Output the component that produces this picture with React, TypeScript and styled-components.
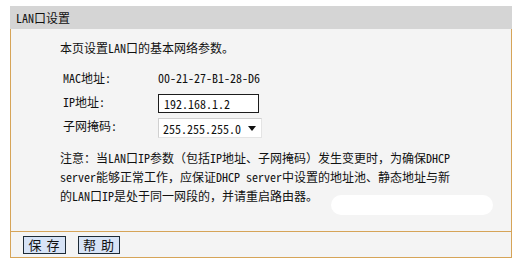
import React from "react";
import styled, { createGlobalStyle } from "styled-components";

const Global = createGlobalStyle`
  html, body { margin: 0; padding: 0; background: #ffffff; }
  body {
    font-family: "Noto Sans Mono CJK SC", "Liberation Mono", "Noto Sans CJK SC", monospace;
    font-size: 12px;
    color: #111;
  }
`;

const Frame = styled.div`
  margin: 6px 0 0 10px;
  width: 502px;
`;

const Header = styled.div`
  height: 23px;
  line-height: 23px;
  background: #d5d5d5;
  padding-left: 6px;
  font-size: 12px;
  color: #111;
`;

const Panel = styled.div`
  position: relative;
  border-left: 1px solid #d6a458;
  border-right: 1px solid #d6a458;
  border-bottom: 1px solid #d6a458;
  background: #f4f4f4;
  height: 203px;
  box-sizing: border-box;
  padding: 10px 0 0 49px;
`;

const Intro = styled.div`
  line-height: 18px;
  height: 18px;
`;

const Form = styled.div`
  display: grid;
  grid-template-columns: 95px auto;
  grid-auto-rows: 24px;
  align-items: center;
  margin: 9px 0 0 3px;
`;

const Label = styled.div`
  line-height: 18px;
`;

const Value = styled.div`
  line-height: 18px;
`;

const TextInput = styled.input`
  box-sizing: border-box;
  width: 101px;
  height: 19px;
  margin-top: 2px;
  border: 1px solid #1c1c1c;
  background: #fff;
  padding: 0 0 0 5px;
  font: inherit;
  font-size: 12px;
  color: #111;
  outline: none;
`;

const Select = styled.div`
  box-sizing: border-box;
  width: 104px;
  height: 20px;
  margin-top: 4px;
  border: 1px solid #d0d0d0;
  border-right-color: #e4e4e4;
  border-bottom-color: #e4e4e4;
  background: #fff;
  display: flex;
  align-items: center;
  justify-content: space-between;
  padding: 0 5px 0 4px;
`;

const Arrow = styled.span`
  width: 0;
  height: 0;
  border-left: 4px solid transparent;
  border-right: 4px solid transparent;
  border-top: 5px solid #111;
`;

const Note = styled.div`
  margin-top: 10px;
  line-height: 19px;
`;

const Blob = styled.div`
  position: absolute;
  left: 320px;
  top: 166px;
  width: 162px;
  height: 20px;
  border-radius: 10px;
  background: #ffffff;
`;

const Footer = styled.div`
  height: 25px;
  border-left: 1px solid #d6a458;
  border-right: 1px solid #d6a458;
  border-bottom: 1px solid #d6a458;
  background: #f4f4f4;
  display: flex;
  align-items: center;
  gap: 12px;
  padding-left: 12px;
`;

const Button = styled.button`
  box-sizing: border-box;
  width: ${(p: { w: number }) => p.w}px;
  height: 18px;
  padding: 0;
  border: 1px solid #1d2a36;
  background: #d7e3f6;
  font-family: "Noto Sans CJK SC", sans-serif;
  font-size: 13px;
  line-height: 16px;
  color: #111;
  letter-spacing: 1px;
`;

export default function App() {
  return (
    <>
      <Global />
      <Frame>
        <Header>LAN口设置</Header>
        <Panel>
          <Intro>本页设置LAN口的基本网络参数。</Intro>
          <Form>
            <Label>MAC地址:</Label>
            <Value>00-21-27-B1-28-D6</Value>
            <Label>IP地址:</Label>
            <div>
              <TextInput defaultValue="192.168.1.2" />
            </div>
            <Label>子网掩码:</Label>
            <div>
              <Select>
                <span>255.255.255.0</span>
                <Arrow />
              </Select>
            </div>
          </Form>
          <Note>
            注意：当LAN口IP参数（包括IP地址、子网掩码）发生变更时，为确保DHCP
            <br />
            server能够正常工作，应保证DHCP server中设置的地址池、静态地址与新
            <br />
            的LAN口IP是处于同一网段的，并请重启路由器。
          </Note>
          <Blob />
        </Panel>
        <Footer>
          <Button w={43}>保 存</Button>
          <Button w={42}>帮 助</Button>
        </Footer>
      </Frame>
    </>
  );
}
